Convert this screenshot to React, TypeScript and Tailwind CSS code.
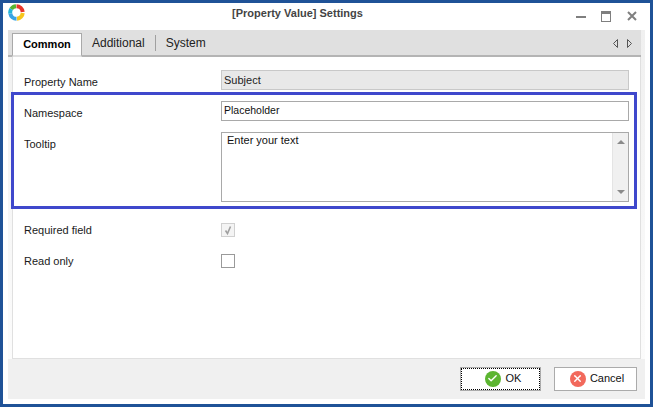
import { Check, X } from "lucide-react";

const labelCls = "w-[197px] text-[11px] leading-[14px] text-[#1a1a1a]";

function Logo() {
  return (
    <svg width="17" height="17" viewBox="0 0 17 17" fill="none" strokeWidth="4" className="mb-[8px]">
      <path d="M3.2 5 A6.3 6.3 0 0 1 8 2.2" stroke="#58b431" />
      <path d="M8.5 2.2 A6.3 6.3 0 0 1 14.7 8" stroke="#e8352b" />
      <path d="M14.7 9 A6.3 6.3 0 0 1 9 14.8" stroke="#f7c51c" />
      <path d="M8.5 14.8 A6.3 6.3 0 0 1 2.3 9.5" stroke="#3aa3e3" />
      <path d="M2.3 9.5 A6.3 6.3 0 0 1 3.2 5" stroke="#23b5d8" />
    </svg>
  );
}

function WindowButtons() {
  return (
    <div className="flex items-center pr-[13px]">
      <div className="h-[2px] w-[10px] bg-[#7f7f7f]" />
      <div className="ml-[15px] h-[11px] w-[10px] border border-t-[3px] border-[#7f7f7f]" />
      <svg width="10" height="10" viewBox="0 0 10 10" stroke="#7f7f7f" strokeWidth="2" className="mb-[2px] ml-[16px]">
        <path d="M1 1 L9 9 M9 1 L1 9" />
      </svg>
    </div>
  );
}

function Scrollbar() {
  return (
    <div className="flex w-[16px] flex-col items-center justify-between border-l border-[#e4e4e4] bg-[#f0f0f0] py-[7px]">
      <svg width="8" height="4" viewBox="0 0 8 4"><path d="M4 0 L8 4 L0 4 Z" fill="#8a8a8a" /></svg>
      <svg width="8" height="4" viewBox="0 0 8 4"><path d="M0 0 L8 0 L4 4 Z" fill="#8a8a8a" /></svg>
    </div>
  );
}

export default function App() {
  return (
    <div className="relative flex h-[407px] w-[653px] flex-col border-[3px] border-[#1f5297] bg-white font-['Liberation_Sans',sans-serif]">
      {/* title bar */}
      <div className="flex h-[27px] shrink-0 items-center justify-between pl-[5px]">
        <Logo />
        <span className="mb-[6px] mr-[6px] text-[11px] font-bold text-[#444444]">[Property Value] Settings</span>
        <WindowButtons />
      </div>

      <div className="mx-[5px] mb-[5px] flex min-h-0 flex-1 flex-col bg-linear-to-b from-[#f0f0f0] to-[#fdfdfd]">
        {/* tabs */}
        <div className="mr-[4px] flex h-[27px] shrink-0 items-end justify-between border-b-[2px] border-[#b4b4b4] bg-[#e0e0e0] pl-[4px] text-[12px]">
          <div className="flex h-[25px] items-center">
            <div className="-mb-[2px] mt-[1px] flex h-[24px] w-[70px] items-center justify-center self-end border border-b-2 border-[#a9a9a9] border-b-[#e0e0e0] bg-white text-[11px] font-bold text-black">Common</div>
            <div className="px-[10px] pt-[1px] text-[#222222]">Additional</div>
            <div className="h-[16px] w-[1px] bg-[#a0a0a0]" />
            <div className="px-[10px] pt-[1px] text-[#222222]">System</div>
          </div>
          <div className="flex items-center gap-[9px] pb-[7px] pr-[9px]">
            <svg width="5" height="9" viewBox="0 0 5 9"><path d="M4.5 0.5 L0.5 4.5 L4.5 8.5 Z" fill="none" stroke="#555555" /></svg>
            <svg width="5" height="9" viewBox="0 0 5 9"><path d="M0.5 0.5 L4.5 4.5 L0.5 8.5 Z" fill="none" stroke="#555555" /></svg>
          </div>
        </div>

        {/* form */}
        <div className="ml-[4px] mr-[4px] flex min-h-0 flex-1 flex-col border border-t-0 border-[#e0e0e0] bg-white pl-[11px] pr-[11px] pt-[13px]">
          <div className="flex h-[20px] items-center">
            <div className={`${labelCls} pt-[4px]`}>Property Name</div>
            <div className="flex h-[20px] flex-1 items-center border border-[#c8c8c8] bg-[#e8e8e8] pl-[2px] text-[11px] text-[#222222]">Subject</div>
          </div>
          <div className="mt-[11px] flex h-[20px] items-center">
            <div className={`${labelCls} pt-[4px]`}>Namespace</div>
            <div className="flex h-[20px] flex-1 items-center border border-[#a9a9a9] bg-white pl-[2px] text-[10.5px] text-[#111111]">Placeholder</div>
          </div>
          <div className="mt-[11px] flex h-[70px]">
            <div className={`${labelCls} pt-[5px]`}>Tooltip</div>
            <div className="flex flex-1 border border-[#a9a9a9] bg-white">
              <div className="-mt-[1px] flex-1 pl-[5px] text-[11px] text-[#111111]">Enter your text</div>
              <Scrollbar />
            </div>
          </div>
          <div className="mt-[21px] flex h-[14px] items-center">
            <div className={labelCls}>Required field</div>
            <div className="flex h-[14px] w-[14px] items-center justify-center border border-[#d0d0d0] bg-[#f4f4f4]">
              <svg width="12" height="12" viewBox="0 0 12 12" fill="none" stroke="#a0a0a0" strokeWidth="1.6">
                <path d="M3.5 6.5 L5.5 9.5 L8.5 2.5" />
              </svg>
            </div>
          </div>
          <div className="mt-[17px] flex h-[14px] items-center">
            <div className={labelCls}>Read only</div>
            <div className="h-[14px] w-[14px] border border-[#9a9a9a] bg-white" />
          </div>
        </div>

        {/* footer */}
        <div className="flex h-[40px] shrink-0 items-center justify-end gap-[13px] bg-[#f0f0f0] pb-[1px] pr-[8px] text-[11px] text-[#111111]">
          <button className="flex h-[24px] w-[81px] items-center justify-center gap-[5px] border border-[#ababab] bg-white pl-[5px] outline-1 -outline-offset-2 outline-dotted outline-black">
            <span className="flex h-[16px] w-[16px] items-center justify-center rounded-full bg-[#5cb531]"><Check size={11} strokeWidth={3} color="white" /></span>
            OK
          </button>
          <button className="flex h-[24px] w-[83px] items-center justify-center gap-[4px] border border-[#ababab] bg-white pl-[3px]">
            <span className="flex h-[16px] w-[16px] items-center justify-center rounded-full bg-[#f2695c]"><X size={11} strokeWidth={3} color="white" /></span>
            Cancel
          </button>
        </div>
      </div>

      {/* highlight annotation */}
      <div className="pointer-events-none absolute left-[8px] top-[89px] h-[117px] w-[626px] border-[3px] border-[#3f48cc]" />
    </div>
  );
}
